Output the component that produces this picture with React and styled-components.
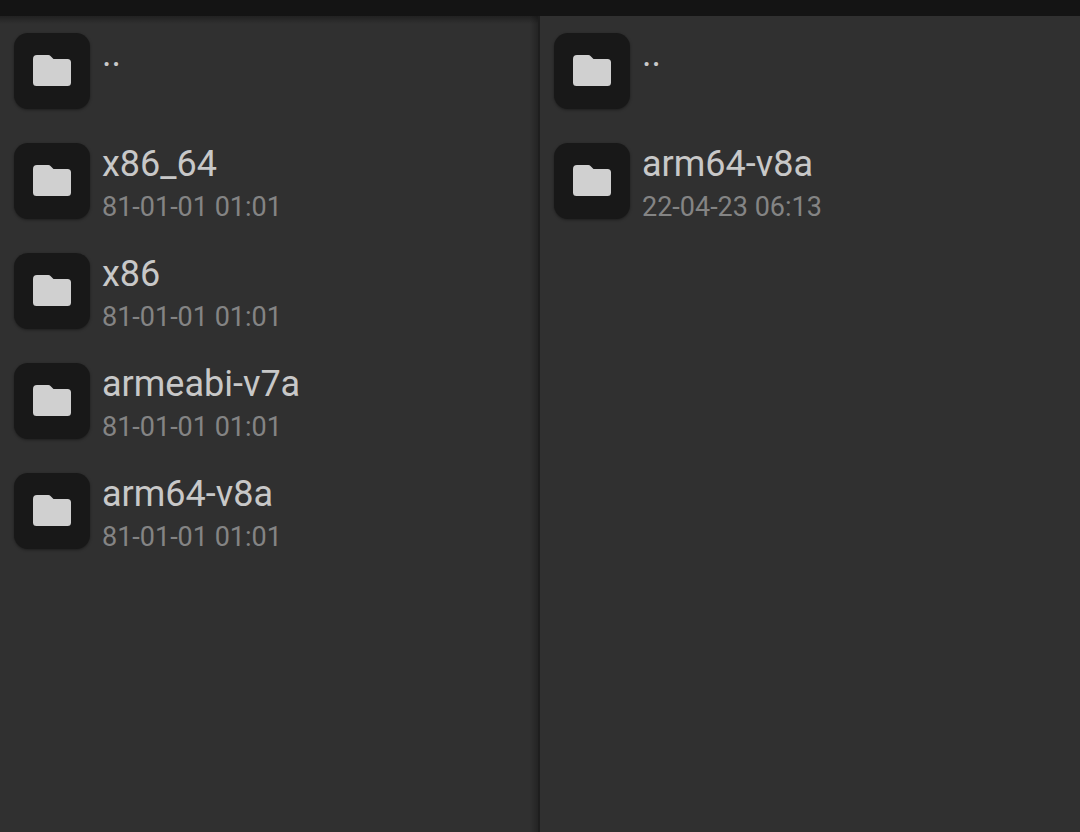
import React from "react";
import styled, { createGlobalStyle } from "styled-components";

const leftFiles = [
  { name: ".." },
  { name: "x86_64", date: "81-01-01 01:01" },
  { name: "x86", date: "81-01-01 01:01" },
  { name: "armeabi-v7a", date: "81-01-01 01:01" },
  { name: "arm64-v8a", date: "81-01-01 01:01" },
];

const rightFiles = [
  { name: ".." },
  { name: "arm64-v8a", date: "22-04-23 06:13" },
];

function FolderIcon() {
  return (
    <FolderSvg viewBox="0 0 38 31" aria-hidden="true">
      <path d="M4 0h11.4a3 3 0 0 1 2.1.9L20.500 4H34.500a3.500 3.500 0 0 1 3.500 3.500V27.500a3.500 3.500 0 0 1-3.500 3.500H3.500A3.500 3.500 0 0 1 0 27.500V4a4 4 0 0 1 4-4z" />
    </FolderSvg>
  );
}

function FilePane({ label, files, inactive }) {
  return (
    <Pane aria-label={label} $inactive={inactive}>
      <FileList>
        {files.map((file) => (
          <li key={file.name}>
            <FileButton type="button">
              <IconTile>
                <FolderIcon />
              </IconTile>
              <FileInfo>
                <FileName>{file.name}</FileName>
                {file.date && <FileDate>{file.date}</FileDate>}
              </FileInfo>
            </FileButton>
          </li>
        ))}
      </FileList>
    </Pane>
  );
}

export default function App() {
  return (
    <>
      <GlobalStyle />
      <Page>
        <TopBar />
        <Panes>
          <FilePane label="Left folder" files={leftFiles} inactive />
          <FilePane label="Right folder" files={rightFiles} />
        </Panes>
      </Page>
    </>
  );
}

const backgroundColor = "#303030";
const barColor = "#141414";
const tileColor = "#181818";
const iconColor = "#d0d0d0";
const nameColor = "#c8c8c8";
const dateColor = "#848484";

const GlobalStyle = createGlobalStyle`
  body {
    margin: 0;
    background-color: ${backgroundColor};
    font-family: Roboto, sans-serif;
  }
`;

const Page = styled.div`
  display: flex;
  flex-direction: column;
  min-height: 100vh;
`;

const TopBar = styled.header`
  height: 16px;
  background-color: ${barColor};
`;

const Panes = styled.main`
  display: grid;
  grid-template-columns: 1fr 1fr;
  flex: 1;
`;

// the inactive pane lies under the top bar and the other pane
const Pane = styled.section`
  border-right: ${({ $inactive }) => ($inactive ? "solid #1e1e1e 2px" : "none")};
  background-color: ${backgroundColor};
  background-image: ${({ $inactive }) =>
    $inactive
      ? `linear-gradient(to left, rgba(0, 0, 0, 0.25), transparent 8px),
         linear-gradient(to bottom, rgba(0, 0, 0, 0.3), transparent 8px)`
      : "none"};
`;

const FileList = styled.ul`
  margin: 0;
  padding: 0;
  list-style: none;
`;

const FileButton = styled.button`
  display: flex;
  align-items: flex-start;
  gap: 12px;
  box-sizing: border-box;
  width: 100%;
  height: 110px;
  padding: 17px 14px;
  border: none;
  background: none;
  font-family: inherit;
  text-align: left;
  cursor: pointer;
`;

const IconTile = styled.span`
  display: flex;
  align-items: center;
  justify-content: center;
  flex-shrink: 0;
  box-sizing: border-box;
  width: 76px;
  height: 76px;
  padding: 0 1px 1px 0;
  border-radius: 14px;
  background-color: ${tileColor};
  box-shadow: 0 1px 3px rgba(0, 0, 0, 0.4);
`;

const FolderSvg = styled.svg`
  width: 38px;
  height: 31px;
  fill: ${iconColor};
`;

const FileInfo = styled.span`
  display: flex;
  flex-direction: column;
`;

const FileName = styled.span`
  color: ${nameColor};
  font-size: 36px;
  line-height: 42px;
`;

const FileDate = styled.span`
  color: ${dateColor};
  font-size: 27px;
  line-height: 44px;
`;
